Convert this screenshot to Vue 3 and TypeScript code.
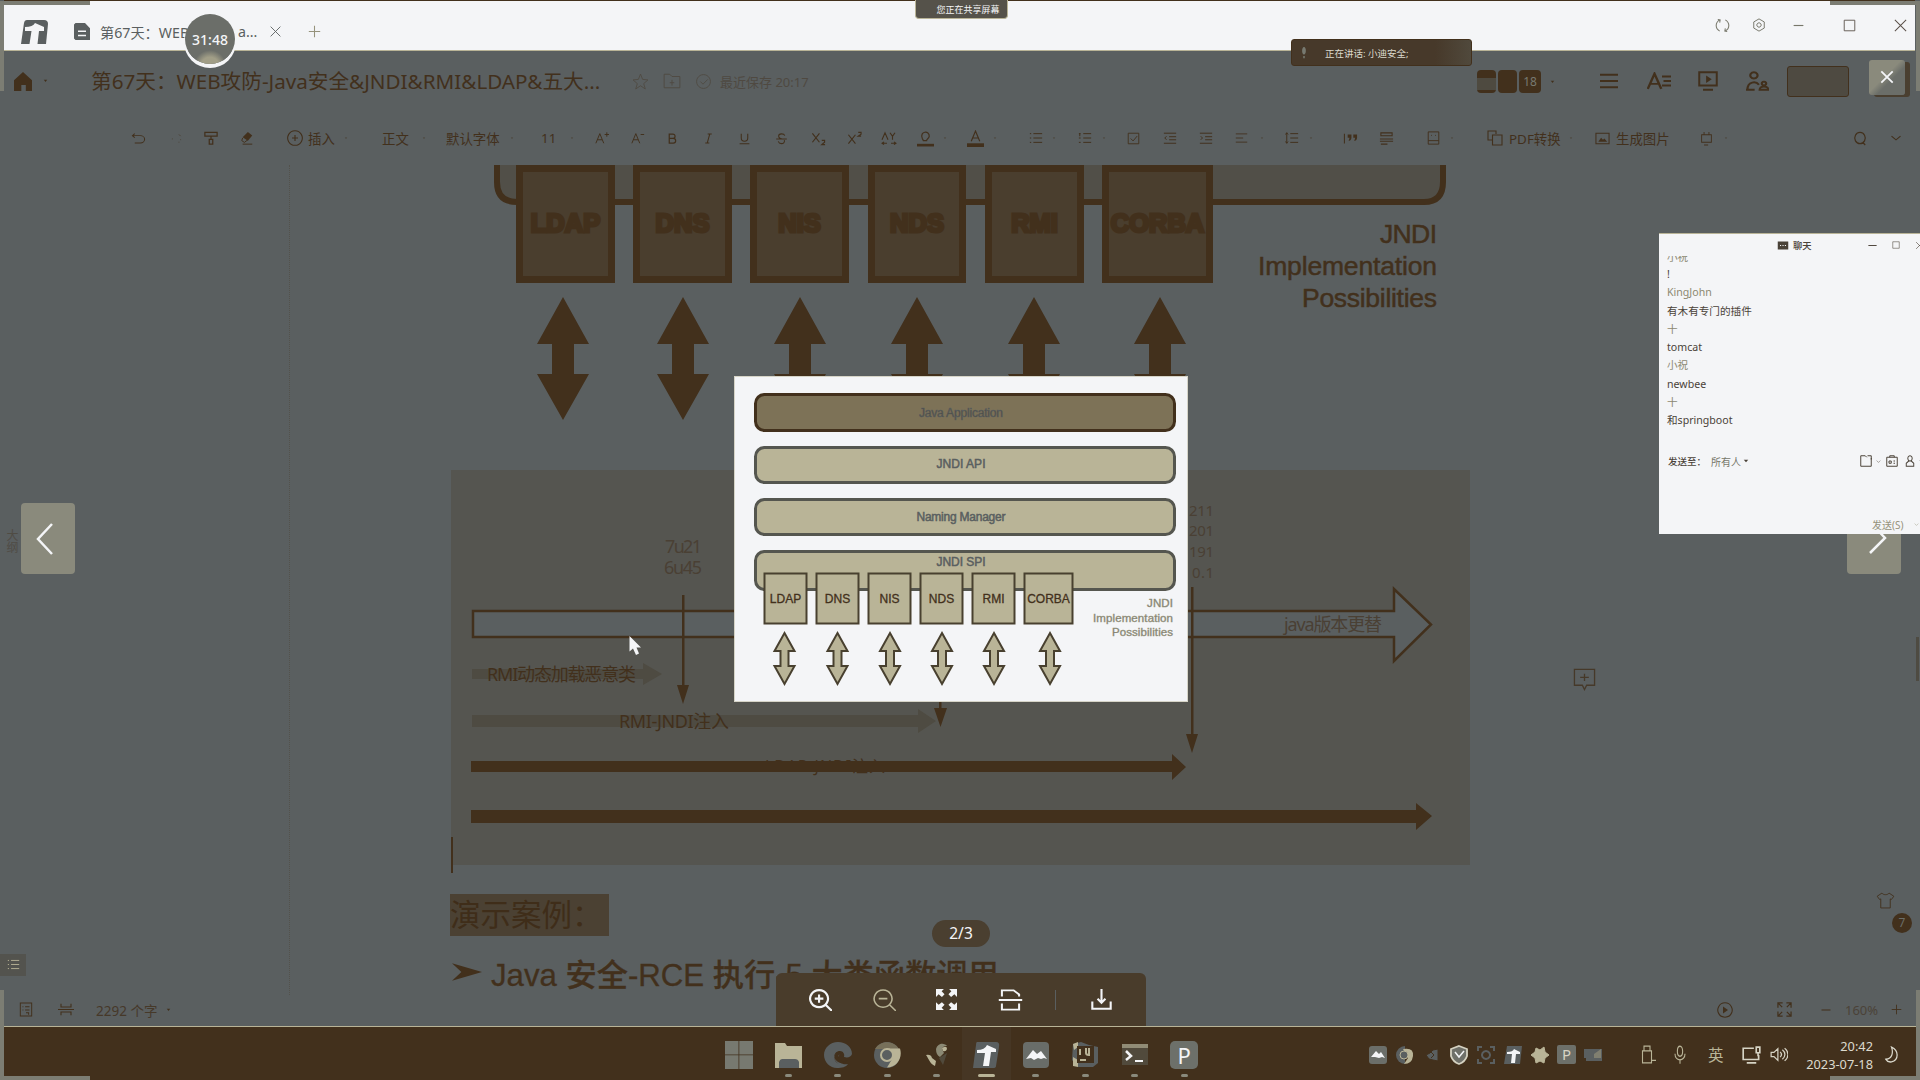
<script setup lang="ts">
import { h } from 'vue'

interface Glyph { s?: string; f?: string; w?: number }

const glyphs: Record<string, Glyph> = {
  undo: { s: 'M4 2 1.5 4.5 4 7M1.5 4.5H10a4.5 4.5 0 0 1 0 9H4' },
  redo: { s: 'M11 3l2 2M13 9v1M11 12v1M3 8v1' },
  painter: { s: 'M1 1.5h14v4H1zM8 5.5v3.500M6 9h4v5H6z', w: 1.4 },
  eraser: { f: 'M9 1l5 4-5 6-6-4z', s: 'M3 8l-1 3 3 2 4-3M3 15h11' },
  plusCircle: { s: 'M8 .7a7.300 7.300 0 1 0 .01 0zM8 5v6M5 8h6', w: 1.1 },
  aPlus: { s: 'M1 14 5.500 3 10 14M3 10h5M11 4h5M13.500 1.500v5' },
  aMinus: { s: 'M1 14 5.500 3 10 14M3 10h5M11 4h4' },
  bold: { s: 'M4 2.500h4.500a2.600 2.600 0 0 1 0 5.300H4zM4 7.800h5a2.900 2.900 0 0 1 0 5.800H4z', w: 1.5 },
  italic: { s: 'M7 2.500h5M4 13.500h5M9.500 2.500l-3 11', w: 1.3 },
  underline: { s: 'M4 2v5.500a4 4 0 0 0 8 0V2M2 14.500h12', w: 1.3 },
  strike: { s: 'M12 4.500C11 1.500 4.500 1.500 4.500 5c0 2 2 3 3.500 3M1.500 8.500h13M11.500 10c.8 3-1.500 4.300-3.500 4.300S4.500 13 4 11.500', w: 1.3 },
  sub: { s: 'M1.500 2.500 9 12M9 2.500 1.500 12M11.500 10h3v2l-3 2.500h3.500', w: 1.2 },
  sup: { s: 'M1.500 4 9 13.500M9 4l-7.500 9.500M12 1.500h3v2l-3 2h3', w: 1.2 },
  spacing: { s: 'M1 10 4 2l3 8M9 2l2.500 4L14 2M11.500 6v4M1 14h5M10 14h5M3 12.500 1 14l2 1.500M13 12.500l2 1.500-2 1.500' },
  marker: { s: 'M5 8c-3-7 7-8 6.500-2-.2 2-2.500 2.500-2.500 4H6z', f: 'M0 13h16v2.500H0z' },
  fontColor: { s: 'M4 10.500 8 1l4 9.500M5.500 7.500h5', f: 'M0 12.500h16V16H0z' },
  bullets: { s: 'M5 3h10M5 8h10M5 13h10M1 3h1.500M1 8h1.500M1 13h1.500' },
  numbers: { s: 'M6 3h9M6 8h9M6 13h9M1 3h2M2 3v3M1 8h2M1 13h2' },
  check: { s: 'M1.500 1.500h13v13h-13zM4.500 8l3 3 5-6' },
  outdent: { s: 'M1 2.500h14M7 6.500h8M7 10h8M1 14h14M4 6 2 8l2 2' },
  indent: { s: 'M1 2.500h14M7 6.500h8M7 10h8M1 14h14M2 6l2 2-2 2' },
  align: { s: 'M1 2.500h14M1 8h9M1 13.500h14' },
  lineHeight: { s: 'M6 3h9M6 8h9M6 13h9M2 2v12M.5 4 2 2l1.500 2M.5 12 2 14l1.500-2' },
  quote: { s: 'M1.500 2v12', f: 'M5 3h4v4c0 3-2 4-3 4l1-4H5zM11 3h4v4c0 3-2 4-3 4l1-4h-2z' },
  divider: { s: 'M2 5V2h12v3zM1 8.500h14M1 11h14M2 14h7' },
  card: { s: 'M1.500 1h13v14h-13zM1.500 11h13M5 5h1M10 5h1' },
  copy: { s: 'M5 10H1V1h8v3M5.500 5h9.500v10H5.500z' },
  image: { s: 'M1 1.500h14v13H1z', f: 'M3.500 12l3-5 2 2.500L10 8l3 4z' },
  plug: { s: 'M2 4h12v8H2zM5 1v3M11 1v3M5 15h5' },
  search: { s: 'M8 1.500a6 6 0 1 0 .01 0zM11 12l3 3', w: 1.4 },
  down: { s: 'M2 5l6 6 6-6', w: 1.4 },
  dot: { f: 'M5 6.500h6l-3 4z' },
  caretDown: { f: 'M2 4.500h12l-6 7z' },
  home: { f: 'M0 7 8 0l8 7v9h-5.500v-5h-4v5H0z' },
  star: { s: 'M8 1l2 5 5 .500-4 3.500 1.500 5L8 12l-4.500 3L5 10 1 6.500 6 6z', w: .8 },
  folder: { s: 'M1 2h5l2 2h7v10H1zM8 7v5M6 9.500h4', w: .8 },
  cloud: { s: 'M8 1.500a6.500 6.500 0 1 0 .01 0zM5 8l2.500 2.500L12 6', w: .8 },
  menu: { s: 'M0 2.500h16M0 8h16M0 13.500h16', w: 1.8 },
  textStyle: { s: 'M.5 15 5 1.500 9.500 15M2 10.500h6M10 4h6M11 8h5M10 12h6', w: 1.6 },
  present: { s: 'M1 1h14v10.500H1zM4 15h8', f: 'M6.500 3.500l4.500 3-4.500 3z', w: 1.6 },
  people: { s: 'M5.500 1a2.500 2.500 0 1 0 .01 0zM1 15c0-7 6-7 8-4M0 15h6M12.500 8.500a1.500 1.500 0 1 0 .01 0M9.500 15c0-3.500 6-3.500 6 0z', w: 1.5 },
  close: { s: 'M2 2l12 12M14 2 2 14' },
  closeBold: { s: 'M1.500 1.500l13 13M14.500 1.500l-13 13', w: 2.1 },
  plus: { s: 'M8 1v14M1 8h14', w: 1.3 },
  minus: { s: 'M2 8h12', w: 1.4 },
  square: { s: 'M1.500 1.500h13v13h-13z' },
  refresh: { s: 'M5 14C0 11 0 5 5 2M3 1.500l2.500.500L5 5M11 2c5 3 5 9 0 12M13 14.500l-2.500-.500L11 11' },
  gear: { s: 'M8 1l6 3.500v7L8 15l-6-3.500v-7zM8 5.500a2.500 2.500 0 1 0 .01 0z' },
  doc: { f: 'M0 1.500 1.500 0H11l5 5v11H1.500L0 14.500zM4 7v1.500h8V7zM4 11v1.500h8V11z' },
  outline: { s: 'M1.500 1h13v14h-13zM4 5h1M7 5h5M4 8.500h1M7 8.500h5M8 11.500h3v2' },
  pageBreak: { s: 'M3 1v4h10V1M0 8h16M3 15v-4h10v4' },
  playCircle: { s: 'M8 .8a7.200 7.200 0 1 0 .01 0z', f: 'M6 4.500l5 3.500-5 3.500z', w: 1.1 },
  expand: { s: 'M1 6V1h5M1 1l4.500 4.500M10 1h5v5M15 1l-4.500 4.500M1 10v5h5M1 15l4.500-4.500M15 10v5h-5M15 15l-4.500-4.500', w: 1.3 },
  zoomIn: { s: 'M7 .8a6.200 6.200 0 1 0 .01 0zM11.500 11.500 16 16M7 4v6M4 7h6', w: 1.5 },
  zoomOut: { s: 'M7 .8a6.200 6.200 0 1 0 .01 0zM11.500 11.500 16 16M4 7h6' },
  actual: { f: 'M0 0h6L4.300 1.800 6.500 4 4.500 6 2 4 0 6zM16 0v6l-2-2-2.500 2-2-2 2.200-2.200L10 0zM0 16v-6l2 2 2.500-2 2 2-2.200 2.200L6 16zM16 16h-6l1.700-1.800L9.500 12l2-2 2.500 2 2-2z' },
  rotate: { s: 'M2.500 5.500V1H10l3.500 3v1.500M2.500 10.500V15h11v-4.500M.5 8h15', w: 1.3 },
  download: { s: 'M1 9.500V15h14V9.500M8 0v10M5 7.500l3 3 3-3', w: 1.6 },
  mic: { s: 'M8 1c-3.500 0-3.500 8 0 8s3.500-8 0-8zM3 7c0 6.500 10 6.500 10 0M8 12v3' },
  micFull: { f: 'M8 0c-5 0-5 10 0 10s5-10 0-10zM6.500 12h3v3h-3z' },
  usb: { s: 'M4 1h6v4H4zM2.500 5h9v10h-9zM11 13h5' },
  monitor: { s: 'M10 2H1v10h13V8M4 15h8M12 1h3v5h-3zM13.500 6v3', w: 1.4 },
  speaker: { s: 'M1 6v4h2.500L7 13.500v-11L3.500 6zM9 5.500c1.500 1.500 1.500 3.500 0 5M11 3.500c3 2.500 3 6.500 0 9M13 2c4 3.500 4 8.500 0 12' },
  moon: { s: 'M8 1c8 3 8 12 0 14-3 .5-5-1-6-2.500C9 12 10 6 8 1z', w: 1.3 },
  shirt: { s: 'M5 1 1 4l2 3 1-.500V15h8V6.500l1 .500 2-3-4-3c-1 2-5 2-6 0z', w: .8 },
  chat: { f: 'M1 1h14v14H1zM4 7v1.800h1.500V7zM7.300 7v1.800h1.500V7zM10.500 7v1.800H12V7z' },
  fileUp: { s: 'M9 3 7 1H1v14h14V4M10 1h5v5', w: 1.3 },
  badge: { s: 'M1 3h14v12H1zM5 3V1h6v2M4 8h3v3H4zM10 8h2M10 11h2', w: 1.3 },
  person: { s: 'M8 1a3.500 3.500 0 1 0 .01 0zM6 8l-4 3v4h12v-4l-4-3', w: 1.5 },
  comment: { s: 'M1 1h14v11H9.500L8 15l-1.500-3H1zM8 4v5M5 6.500h6', w: .9 },
  arrowhead: { f: 'M0 1l16 7L0 15l5-7z' },
}

const Icon = (p: { n: string; w: number; t?: number }) => {
  const g = glyphs[p.n]
  const kids = []
  if (g.s) kids.push(h('path', { d: g.s, fill: 'none', stroke: 'currentColor', 'stroke-width': g.w ?? 1.1 }))
  if (g.f) kids.push(h('path', { d: g.f, fill: 'currentColor', 'fill-rule': 'evenodd' }))
  return h('svg', { width: p.w, height: p.t ?? p.w, viewBox: '0 0 16 16', preserveAspectRatio: 'none', style: 'display:block;flex:none' }, kids)
}
Icon.props = ['n', 'w', 't']

interface Item { x: number; w: number; icon?: string; t?: number; label?: string; cls?: string }

/* Turns left edges into the gap that precedes every item of a flex row. */
const spaced = (items: Item[]) => items.map((it, i) => ({ ...it, gap: it.x - (i ? items[i - 1].x + items[i - 1].w : 0) }))
const d = (x: number): Item => ({ x: x - 3, w: 6, icon: 'dot', cls: 'dim' })

const tools = spaced([
  { x: 131, w: 15, icon: 'undo', t: 13 }, { x: 170, w: 13, icon: 'redo', cls: 'dim' },
  { x: 204, w: 14, icon: 'painter', t: 15 }, { x: 240, w: 14, icon: 'eraser' },
  { x: 287, w: 16, icon: 'plusCircle' }, { x: 308, w: 28, label: '插入' }, d(346),
  { x: 382, w: 26, label: '正文' }, d(424), { x: 446, w: 55, label: '默认字体' }, d(512),
  { x: 541, w: 14, label: '11' }, d(572),
  { x: 595, w: 14, icon: 'aPlus' }, { x: 631, w: 14, icon: 'aMinus' }, { x: 666, w: 13, icon: 'bold' },
  { x: 702, w: 13, icon: 'italic' }, { x: 738, w: 13, icon: 'underline' }, { x: 775, w: 13, icon: 'strike' },
  { x: 811, w: 15, icon: 'sub' }, { x: 847, w: 15, icon: 'sup' }, { x: 881, w: 16, icon: 'spacing', t: 14 },
  { x: 917, w: 17, icon: 'marker', t: 17 }, d(945), { x: 967, w: 17, icon: 'fontColor', t: 17 }, d(995),
  { x: 1029, w: 14, icon: 'bullets' }, d(1054), { x: 1078, w: 14, icon: 'numbers' }, d(1104),
  { x: 1127, w: 13, icon: 'check' }, { x: 1163, w: 14, icon: 'outdent' }, { x: 1199, w: 14, icon: 'indent' },
  { x: 1235, w: 13, icon: 'align', t: 12 }, d(1262), { x: 1285, w: 14, icon: 'lineHeight' }, d(1311),
  { x: 1343, w: 15, icon: 'quote', t: 13 }, { x: 1379, w: 15, icon: 'divider' }, { x: 1427, w: 13, icon: 'card', t: 14 }, d(1452),
  { x: 1487, w: 16, icon: 'copy' }, { x: 1509, w: 53, label: 'PDF转换' }, d(1571),
  { x: 1595, w: 15, icon: 'image', t: 13 }, { x: 1616, w: 54, label: '生成图片' },
  { x: 1700, w: 13, icon: 'plug', t: 15 }, d(1726), { x: 1853, w: 14, icon: 'search', t: 15 }, { x: 1890, w: 12, icon: 'down', t: 10 },
])

const headIcons = spaced([
  { x: 0, w: 18, icon: 'menu' }, { x: 47, w: 24, icon: 'textStyle', t: 18 },
  { x: 98, w: 20, icon: 'present' }, { x: 146, w: 23, icon: 'people', t: 20 },
])

const bigBoxes = [['LDAP', 516, 99], ['DNS', 633, 99], ['NIS', 750, 99], ['NDS', 868, 98], ['RMI', 985, 99], ['CORBA', 1102, 111]] as [string, number, number][]
const bigArrows = [563, 683, 800, 917, 1034, 1160]
const smallBoxes = [['LDAP', 764.5, 42], ['DNS', 816.5, 42], ['NIS', 868.5, 42], ['NDS', 920.5, 42], ['RMI', 972.5, 42], ['CORBA', 1024.5, 48]] as [string, number, number][]
const smallArrows = [784.5, 837.5, 890, 942, 994, 1050]
const bars = [
  { y: 394.5, h: 36, t: 'Java Application', w: 84, ty: 413, c: 'dark' },
  { y: 447.500, h: 35, t: 'JNDI API', w: 49, ty: 464 },
  { y: 499.5, h: 35, t: 'Naming Manager', w: 89, ty: 517 },
  { y: 551.5, h: 38, t: 'JNDI SPI', w: 49, ty: 562 },
]

const messages = [
  { t: '小祝', c: 'soft cut' }, { t: '!', c: '' }, { t: 'KingJohn', c: 'soft' }, { t: '有木有专门的插件', c: '' },
  { t: '十', c: 'soft' }, { t: 'tomcat', c: '' }, { t: '小祝', c: 'soft' }, { t: 'newbee', c: '' },
  { t: '十', c: 'soft' }, { t: '和springboot', c: '' },
]
</script>

<template>
  <div class="desktop">
    <header class="tabs">
      <svg class="logo" width="27" height="24" viewBox="0 0 27 24">
        <path d="M6 0H23q4 0 4 4L25 24H0L3 3Q3.500 0 6 0z" fill="#5a5f60" />
        <path d="M4 7q8 0 10-4l9 4v4H18L16.500 24H8.500L10.500 11H4z" fill="#f4f5f7" />
      </svg>
      <Icon class="tabdoc" n="doc" :w="16" :t="17" />
      <span class="tabname">第67天：WEB</span><span class="tabrest">a...</span>
      <Icon class="tabx" n="close" :w="13" />
      <Icon class="tabplus" n="plus" :w="13" />
      <div class="winbtns">
        <Icon n="refresh" :w="15" /><Icon n="gear" :w="14" /><Icon n="minus" :w="13" />
        <Icon class="dk" n="square" :w="13" /><Icon class="dk" n="close" :w="15" />
      </div>
    </header>

    <div class="head">
      <Icon n="home" :w="18" :t="19" /><Icon class="hd" n="dot" :w="9" />
      <span class="title">第67天：WEB攻防-Java安全&amp;JNDI&amp;RMI&amp;LDAP&amp;五大...</span>
      <div class="meta"><Icon n="star" :w="17" /><Icon n="folder" :w="18" /><Icon n="cloud" :w="17" /><span>最近保存 20:17</span></div>
      <div class="avatars"><i class="a1"></i><i class="a2"></i><b>18</b></div>
      <Icon class="hd2" n="dot" :w="9" />
      <div class="hicons">
        <Icon v-for="i in headIcons" :key="i.x" :n="i.icon!" :w="i.w" :t="i.t" :style="{ marginLeft: i.gap + 'px' }" />
      </div>
      <div class="share"></div>
    </div>

    <div class="tools">
      <div v-for="i in tools" :key="i.x" class="tool" :class="i.cls" :style="{ marginLeft: i.gap + 'px', width: i.w + 'px' }">
        <Icon v-if="i.icon" :n="i.icon" :w="i.w" :t="i.t" /><span v-else>{{ i.label }}</span>
      </div>
    </div>

    <main class="doc">
      <div class="gutter"></div>
      <article>
        <svg class="jndi" width="1019" height="305" viewBox="450 165 1019 305">
          <path d="M497 150V182q0 20 20 20H1424q19 0 19-20V150z" fill="#514f48" stroke="#42301c" stroke-width="6" />
          <g v-for="b in bigBoxes" :key="b[0]">
            <rect :x="b[1] + 3.5" y="168.500" :width="b[2] - 7" height="111" fill="#4a3e2e" stroke="#42301c" stroke-width="7" />
            <text :x="b[1] + b[2] / 2" y="232" text-anchor="middle" class="boxt">{{ b[0] }}</text>
          </g>
          <path v-for="x in bigArrows" :key="x" :transform="`translate(${x} 0)`" fill="#42301c" d="M0 297 26 344H11V374H26L0 420-26 374H-11V344H-26z" />
          <g class="jtext" text-anchor="end">
            <text x="1437" y="243" textLength="57">JNDI</text>
            <text x="1437" y="275" textLength="179">Implementation</text>
            <text x="1437" y="307" textLength="135">Possibilities</text>
          </g>
        </svg>
        <svg class="timeline" width="1019" height="395" viewBox="451 470 1019 395">
          <path d="M473 611H1394V589L1431 624.500 1394 661V637H473z" fill="#5a5f60" stroke="#42301c" stroke-width="2.500" />
          <g fill="#4e4b42"><path d="M472 669H643V663L662 674 643 685V679H472z" /><path d="M472 715H918V709L936 721 918 733V727H472z" /></g>
          <g fill="#42301c">
            <path d="M471 761H1172V754L1186 767 1172 780V772H471z" /><path d="M471 810H1416V803L1432 816 1416 830V823H471z" />
            <path d="M682 595h2.500V685H689L683 704 677 685h5z" /><path d="M1191 587h2.500V734H1198L1192 753 1186 734h5z" />
            <path d="M939 595h2.500V708H947L940.500 727 934 708h5z" />
          </g>
          <g class="tl">
            <text x="665" y="553" textLength="37" class="thin">7u21</text><text x="664" y="574" textLength="38" class="thin">6u45</text>
            <text x="1189" y="516" textLength="25" class="thin sm">211</text><text x="1189" y="536" textLength="25" class="thin sm">201</text>
            <text x="1189" y="557" textLength="25" class="thin sm">191</text><text x="1192" y="578" textLength="22" class="thin sm">0.1</text>
            <text x="487" y="681" textLength="149">RMI动态加载恶意类</text>
            <text x="619" y="728" textLength="110">RMI-JNDI注入</text>
            <text x="765" y="772" textLength="120" class="ldap">LDAP-JNDI注入</text>
            <text x="1284" y="631" textLength="98" class="thin">java版本更替</text>
          </g>
        </svg>
        <div class="caret"></div>
        <h2><span>演示案例：</span></h2>
        <h3><Icon n="arrowhead" :w="30" :t="20" /><span>Java 安全-RCE 执行-5 大类函数调用</span></h3>
      </article>
      <Icon class="addcomment" n="comment" :w="23" />
      <div class="scroll"></div>
      <div class="toc"><Icon n="bullets" :w="13" /></div>
      <Icon class="shirt" n="shirt" :w="19" :t="17" />
      <div class="seven">7</div>
      <div class="sidetext">大纲</div>
    </main>

    <footer class="status">
      <Icon n="outline" :w="14" :t="15" /><Icon class="pb" n="pageBreak" :w="16" :t="13" />
      <span class="words">2292 个字</span><Icon n="dot" :w="9" />
      <div class="sright">
        <Icon n="playCircle" :w="16" /><Icon n="expand" :w="15" /><Icon n="minus" :w="12" /><span>160%</span><Icon n="plus" :w="11" />
      </div>
    </footer>

    <div class="taskbar">
      <div class="apps">
        <div class="app"><svg width="28" height="28" viewBox="0 0 28 28"><path d="M0 0h13.500v13.500H0zM14.300 0H28v13.500H14.300zM0 14.300h13.500V28H0zM14.300 14.300H28V28H14.300z" fill="#777970" /></svg></div>
        <div class="app run"><svg width="28" height="28" viewBox="0 0 28 28"><path d="M1 2h10l2 3h15v22H1z" fill="#b9b497" /><path d="M5 27v-6q1-3 3-3h13q3 0 4 3v6z" fill="#5a5f60" /></svg></div>
        <div class="app run"><svg width="28" height="28" viewBox="0 0 28 28"><path d="M14 1C6 1 0 7 0 14s6 13 13 13c5 0 9-1 11-4-5 1-10-1-10-6 0-3 2-2 1-4-1-1-3-1-4 1-2 4 1 7 4 9-7-3-6-13 1-13 3 0 5 3 4 6 4 1 7 0 8-3C28 6 22 1 14 1z" fill="#5a5f60" /><path d="M12 12q4-3 4 1-3 2-1 5 3 4 9 1-5 5-10 2-6-4-2-9z" fill="#42301c" /></svg></div>
        <div class="app run"><svg width="28" height="28" viewBox="0 0 28 28"><circle cx="14" cy="14" r="13" fill="#5a5f60" /><path d="M2 8C7-1 21-1 26 8L14 8z" fill="#77705a" /><path d="M14 7.500H27c3 9-3 19-13 19l6-10z" fill="#b9b497" /><circle cx="14" cy="14" r="6" fill="#5a5f60" stroke="#b9b497" stroke-width="2" /></svg></div>
        <div class="app run"><svg width="28" height="28" viewBox="0 0 28 28"><path d="M3 14q5-1 6 3l4 3-1 5c-5-2-6-7-9-11z" fill="#b9b497" /><path d="M13 8c2-7 9-6 11-3-5 0-6 2-3 7l-4 4q-4-2-4-8z" fill="#8b8974" /><path d="M19 7q5-3 5 1-1 3-4 2z" fill="#b9b497" /><path d="M16 17l8-5-4 12z" fill="#514a3c" /></svg></div>
        <div class="app run on"><svg width="28" height="28" viewBox="0 0 28 28"><path d="M5 1h19q4 0 3 5l-3 19q0 2-3 2H1L4 4q0-3 1-3z" fill="#5a5f60" /><path d="M5 9q8 0 10-5l9 4v3H19L17 25H11L13 12H5z" fill="#f4f5f7" /></svg></div>
        <div class="app run"><svg width="28" height="28" viewBox="0 0 28 28"><rect x="1" y="1" width="26" height="26" rx="4" fill="#696d69" /><path d="M4 18 11 9l4 4 4-3 6 8-3-1-3 1-3-1-4 2-3-2z" fill="#f4f5f7" /></svg></div>
        <div class="app run"><svg width="28" height="28" viewBox="0 0 28 28"><path d="M2 3l8-2 8 3 9 2v16l-5 4H7l-6-7z" fill="#5a5f60" /><path d="M2 3l5-2v5L3 9zM2 16l5 3v7l-5-1z" fill="#b9b497" /><rect x="6" y="5" width="17" height="17" fill="#42301c" /><path d="M9 8v6M15 7v5q0 2 3 2V7M9 19h6" fill="none" stroke="#b9b497" stroke-width="2" /></svg></div>
        <div class="app run"><svg width="28" height="28" viewBox="0 0 28 28"><path d="M1 3h26v21H1z" fill="#514a3c" /><path d="M1 3h26v4H1z" fill="#918c76" /><path d="M5 10l5 5-5 4" fill="none" stroke="#f4f5f7" stroke-width="2.500" /><path d="M14 20h8" stroke="#f4f5f7" stroke-width="2" /></svg></div>
        <div class="app run"><div class="p">P</div></div>
      </div>
      <div class="tray">
        <svg width="20" height="20" viewBox="0 0 20 20"><rect x="1" y="1" width="18" height="18" rx="3" fill="#6b6e69" /><path d="M3 12l5-6 3 3 2-2 4 6-3-1-3 1-4-1z" fill="#f4f5f7" /></svg>
        <svg width="20" height="20" viewBox="0 0 20 20"><path d="M10 1a9 9 0 0 0 0 18z" fill="#5a5f60" /><path d="M8 4q11-2 10 7-1 8-9 8l4-6z" fill="#b9b497" /><circle cx="9" cy="10" r="4" fill="#5a5f60" stroke="#b9b497" /></svg>
        <svg width="20" height="20" viewBox="0 0 20 20"><path d="M16 4v12l-5-1-4-1-3-4 4-2 3-3zM9 7l3 3-3 3" fill="#5a5f60" stroke="#42301c" /></svg>
        <svg width="20" height="20" viewBox="0 0 20 20"><path d="M10 1l8 3v7q-2 6-8 8-6-2-8-8V4z" fill="#6f7069" stroke="#d5d2c2" stroke-width="1.800" /><path d="M6 7l4 5 5-6" fill="none" stroke="#f4f5f7" stroke-width="1.500" /></svg>
        <svg width="20" height="20" viewBox="0 0 20 20"><path d="M2 6V2h4M14 2h4v4M18 14v4h-4M6 18H2v-4M10 6a4 4 0 1 0 .01 0z" fill="none" stroke="#5a5f60" stroke-width="2" /></svg>
        <svg width="20" height="20" viewBox="0 0 20 20"><path d="M4 1h15l-2 18H1z" fill="#5a5f60" /><path d="M4 7q6 0 7-3l6 3v2H13l-1 9H8l1-9H4z" fill="#f4f5f7" /></svg>
        <svg width="20" height="20" viewBox="0 0 20 20"><path d="M6 3l4 2 4-3 1 5 4 3-4 3-1 5-4-2-4 2-1-5-4-3 4-3z" fill="#b9b497" stroke="#b9b497" stroke-linejoin="round" /></svg>
        <div class="p sm">P</div>
        <svg width="20" height="20" viewBox="0 0 20 20"><path d="M1 4h18v12H3v-3H1z" fill="#5a5f60" /><path d="M11 9l7-5v9h-7z" fill="#807f70" /></svg>
      </div>
      <div class="sys">
        <Icon class="s1" n="usb" :w="16" :t="19" /><Icon class="s2" n="mic" :w="16" :t="20" />
        <span class="ime">英</span><Icon class="s3" n="monitor" :w="19" :t="18" /><Icon class="s4" n="speaker" :w="18" :t="17" />
        <div class="clock"><span>20:42</span><span>2023-07-18</span></div>
        <Icon class="s5" n="moon" :w="15" :t="17" />
      </div>
    </div>

    <div class="viewer">
      <svg width="454" height="326" viewBox="734 376 454 326">
        <g v-for="b in bars" :key="b.t">
          <rect x="755.500" :y="b.y" width="419" :height="b.h" rx="9" :fill="b.c ? '#7d7257' : '#b9b497'" :stroke="b.c ? '#42301c' : '#55564f'" stroke-width="3" />
          <text class="vt" x="961" :y="b.ty + 4" text-anchor="middle" :textLength="b.w" :fill="b.c ? '#4b463c' : '#5a5f60'">{{ b.t }}</text>
        </g>
        <g v-for="b in smallBoxes" :key="b[0]">
          <rect :x="b[1]" y="573.500" :width="b[2]" height="50" fill="#b9b497" stroke="#48402f" stroke-width="2" />
          <text class="vb" :x="b[1] + b[2] / 2" y="603" text-anchor="middle">{{ b[0] }}</text>
        </g>
        <path v-for="x in smallArrows" :key="x" :transform="`translate(${x} 0)`" fill="#b9b497" stroke="#48402f" stroke-width="2" d="M0 633 10 651H4V666H10L0 684-10 666H-4V651H-10z" />
        <g class="vr" text-anchor="end">
          <text x="1173" y="607" textLength="26">JNDI</text><text x="1173" y="622" textLength="80">Implementation</text><text x="1173" y="636" textLength="61">Possibilities</text>
        </g>
      </svg>
    </div>
    <svg class="pointer" width="13" height="20" viewBox="0 0 13 20"><path d="M.5 0V15.500L4 12.500 7 19 10 17.500 7.500 11.500H12z" fill="#f4f5f7" /></svg>

    <div class="nav prev"><svg width="54" height="71"><path d="M31 21 17 36 31 51" fill="none" stroke="#f4f5f7" stroke-width="2.500" /></svg></div>
    <div class="nav next"><svg width="54" height="71"><path d="M24 20 38 35 23 50" fill="none" stroke="#f4f5f7" stroke-width="2.500" /></svg></div>
    <div class="shut"><Icon n="closeBold" :w="14" /></div>
    <div class="page">2/3</div>
    <div class="vtools">
      <Icon n="zoomIn" :w="23" :t="22" /><Icon class="off" n="zoomOut" :w="23" :t="22" /><Icon n="actual" :w="21" />
      <Icon n="rotate" :w="25" :t="22" /><i></i><Icon n="download" :w="21" />
    </div>

    <section class="chat">
      <div class="chead"><Icon n="chat" :w="12" :t="9" /><b>聊天</b><div><Icon n="minus" :w="11" /><Icon n="square" :w="8" /><Icon n="close" :w="9" /></div></div>
      <div class="msgs"><p v-for="(m, i) in messages" :key="i" :class="m.c">{{ m.t }}</p></div>
      <div class="to"><span>发送至：</span><em>所有人</em><Icon n="caretDown" :w="6" />
        <div><Icon n="fileUp" :w="12" /><Icon n="down" :w="5" /><Icon n="badge" :w="12" /><Icon n="person" :w="10" :t="12" /><Icon n="down" :w="5" /></div>
      </div>
      <div class="send"><span>发送(S)</span><Icon n="down" :w="5" /></div>
    </section>

    <div class="talk"><Icon n="micFull" :w="8" :t="12" /><span>正在讲话: 小迪安全;</span></div>
    <div class="sharing">您正在共享屏幕</div>
    <div class="timer">31:48</div>
    <i class="grip g1"></i><i class="grip g2"></i><i class="grip g3"></i><i class="grip g4"></i>
  </div>
</template>

<style>
body { margin: 0; background: #5a5f60; overflow: hidden; }
</style>

<style scoped>
* { box-sizing: border-box; }
.desktop { position: relative; width: 1920px; height: 1080px; overflow: hidden; display: flex; flex-direction: column; background: #5a5f60; color: #42301c; font-family: "Noto Sans", "Noto Sans CJK SC", sans-serif; white-space: nowrap; }
.tabs { flex: none; height: 51px; border-top: 1px solid #42301c; border-bottom: 1px solid #b9b497; background: #f4f5f7; display: flex; align-items: center; margin: 0 5px 0 4px; padding: 12px 0 0 17px; color: #5a5f60; }
.logo { flex: none; margin-right: 26px; }
.tabname { width: 88px; margin-left: 10px; font-size: 14.200px; }
.tabrest { margin-left: 50px; width: 19px; font-size: 14.200px; }
.tabx { margin-left: 12px; }
.tabplus { margin-left: 26px; color: #96937c; }
.winbtns { margin-left: auto; display: flex; align-items: center; margin-right: 7px; margin-top: -13px; color: #77776a; }
.winbtns > * + * { margin-left: 22px; }
.winbtns > :nth-child(3) { margin-left: 26px; }
.winbtns > :nth-child(4) { margin-left: 38px; }
.winbtns > :nth-child(5) { margin-left: 37px; }
.dk { color: #5a5048; }
.head { flex: none; height: 60px; display: flex; align-items: center; padding-left: 14px; }
.hd { margin: -2px 0 0 9px; }
.title { margin: -2px 0 0 41px; width: 508px; font-size: 20.650px; }
.meta { display: flex; align-items: center; margin-left: 33px; width: 170px; gap: 14px; opacity: .45; font-size: 13px; }
.meta span { margin-left: -6px; }
.avatars { margin-left: 675px; display: flex; gap: 2px; }
.avatars > * { height: 23px; width: 19px; border-radius: 4px; background: #42301c; }
.avatars .a1 { background: linear-gradient(#42301c 35%, #4e4a40 35% 88%, #42301c 88%); }
.avatars b { width: 22px; font-size: 12px; font-weight: 400; line-height: 23px; text-align: center; color: #777970; }
.hd2 { margin-left: 7px; }
.hicons { display: flex; align-items: center; margin-left: 43px; width: 187px; }
.share { width: 62px; height: 31px; border: 1px solid #42301c; border-radius: 3px; background: #4e4a41; }
.tools { flex: none; height: 54px; display: flex; align-items: center; font-size: 13.400px; }
.tool { flex: none; }
.dim { opacity: .6; }
.doc { position: relative; flex: 1; min-height: 0; display: flex; overflow: hidden; }
.gutter { width: 290px; border-right: 1px dotted #53524c; margin-right: 160px; }
article { width: 1020px; }
.jndi { display: block; }
.boxt { font: bold 25.500px "Liberation Sans", sans-serif; fill: #42301c; stroke: #42301c; stroke-width: 3; }
.jtext { font: 26.500px "Liberation Sans", sans-serif; fill: #42301c; stroke: #42301c; stroke-width: .5; }
.timeline { display: block; margin-left: 1px; background: #555550; }
.tl { font: 18px "Noto Sans", "Noto Sans CJK SC", sans-serif; fill: #42301c; }
.thin { fill: #4a4034; }
.sm { font-size: 15px; }
.ldap { font-size: 16px; }
.caret { width: 2px; height: 36px; margin: -28px 0 0 1px; background: #42301c; }
h2 { margin: 21px 0 0; height: 42px; line-height: 41px; font-weight: 400; font-size: 30.500px; display: flex; }
h2 span { width: 159px; background: #4b4133; color: #3f2d19; }
h3 { margin: 13px 0 0 2px; height: 46px; display: flex; align-items: center; font: 500 31.200px "Liberation Sans", "Noto Sans CJK SC", sans-serif; -webkit-text-stroke: .3px #42301c; }
h3 span { margin-left: 9px; }
.addcomment { position: absolute; left: 1573px; top: 503px; opacity: .8; }
.scroll { position: absolute; left: 1916px; top: 472px; width: 3px; height: 44px; background: #4e4b42; }
.toc { position: absolute; left: 0; top: 789px; width: 26px; height: 22px; padding: 4px 7px; background: #53534e; color: #b9b497; }
.shirt { position: absolute; left: 1876px; top: 727px; }
.seven { position: absolute; left: 1892px; top: 748px; width: 20px; height: 20px; border-radius: 50%; background: #42301c; color: #6b6e69; font-size: 12px; line-height: 20px; text-align: center; }
.sidetext { position: absolute; left: 3px; top: 364px; writing-mode: vertical-rl; font-size: 12px; opacity: .4; }
.status { flex: none; height: 31px; display: flex; align-items: center; padding: 0 0 2px 19px; font-size: 13.500px; }
.pb { margin-left: 25px; }
.words { width: 64px; margin: 0 4px 0 22px; opacity: .8; }
.sright { margin-left: auto; display: flex; align-items: center; margin-right: 18px; }
.sright > :nth-child(2) { margin-left: 44px; }
.sright > :nth-child(3) { margin-left: 28px; }
.sright > span { width: 34px; margin: 0 12px 0 13px; opacity: .6; font-size: 13px; }
.taskbar { flex: none; height: 54px; border-top: 1px solid #b9b497; background: #42301c; position: relative; display: flex; color: #b9b497; }
.apps { display: flex; margin-left: 714px; width: 495px; }
.app { width: 49.500px; height: 53px; display: flex; flex-direction: column; align-items: center; padding-top: 14px; }
.run::after { content: ""; width: 7px; height: 3px; margin-top: 5px; border-radius: 2px; background: #8a8a7c; flex: none; }
.on { background: #463624; }
.on::after { width: 17px; background: #b9b497; }
.p { width: 28px; height: 28px; border-radius: 5px; background: #6d706a; color: #f4f5f7; font: 22px/28px "Noto Sans", sans-serif; text-align: center; }
.p.sm { width: 19px; height: 19px; border-radius: 2px; color: #d6d3c4; font-size: 15px; line-height: 19px; }
.tray { display: flex; align-items: center; gap: 7px; margin-left: 159px; height: 55px; }
.sys { display: flex; align-items: center; height: 55px; margin-left: 37px; }
.s2 { margin-left: 16px; }
.ime { margin-left: 20px; width: 16px; font-size: 15.500px; }
.s3 { margin-left: 18px; color: #d6d3c4; }
.s4 { margin-left: 9px; color: #d6d3c4; }
.clock { margin-left: 15px; width: 70px; text-align: right; display: flex; flex-direction: column; font-size: 12.800px; line-height: 18px; color: #dcdace; margin-top: 0; }
.s5 { margin-left: 11px; color: #dcdace; }
.viewer { position: absolute; left: 734px; top: 376px; width: 454px; height: 326px; background: #f4f5f7; box-shadow: inset 0 0 0 1px #d6d4c7; }
.viewer svg { display: block; }
.vt { font: 12px "Liberation Sans", sans-serif; stroke: #5a5f60; stroke-width: .5; }
.vb { font: 12px "Liberation Sans", sans-serif; fill: #42301c; stroke: #42301c; stroke-width: .3; }
.vr { font: 11.500px "Liberation Sans", sans-serif; fill: #77786e; stroke: #9c9982; stroke-width: .4; }
.pointer { position: absolute; left: 629px; top: 636px; }
.nav { position: absolute; top: 503px; width: 54px; height: 71px; border-radius: 4px; background: #8a8a7c; }
.prev { left: 21px; }
.next { left: 1847px; }
.shut { position: absolute; left: 1869px; top: 60px; width: 36px; height: 35px; padding: 10px 11px; background: linear-gradient(135deg, #8a8a7c 45%, #6b6e69 60%); color: #f4f5f7; border-radius: 3px; box-shadow: 5px 2px 0 #4a3f30; }
.page { position: absolute; left: 932px; top: 920px; width: 58px; height: 27px; border-radius: 14px; background: #4a3f30; color: #f4f5f7; font-size: 15.500px; line-height: 27px; text-align: center; }
.vtools { position: absolute; left: 776px; top: 973px; width: 370px; height: 53px; padding-left: 33px; border-radius: 6px 6px 0 0; background: #493c2b; display: flex; align-items: center; color: #f4f5f7; }
.vtools > :nth-child(n+2) { margin-left: 40.500px; }
.vtools .off { color: #b9b497; }
.vtools > i { width: 1px; height: 20px; margin-left: 32px !important; background: #5a5f60; }
.vtools > :nth-child(6) { margin-left: 35px; }
.chat { position: absolute; left: 1659px; top: 233px; width: 261px; height: 301px; background: #f4f5f7; border-top: 1px solid #b9b497; color: #4a4238; font-size: 10.500px; display: flex; flex-direction: column; overflow: hidden; }
.chead { height: 22px; display: flex; align-items: center; padding-left: 118px; font-size: 9px; flex: none; }
.chead b { font-weight: 500; margin-left: 4px; font-size: 9.300px; }
.chead div { display: flex; align-items: center; margin-left: 55px; }
.chead div > :nth-child(2) { margin-left: 14px; }
.chead div > :nth-child(3) { margin-left: 15px; }
.msgs { height: 178px; padding-left: 8px; font-size: 10.600px; }
.msgs p { margin: 0; height: 18.300px; line-height: 19px; }
.msgs .cut { height: 9px; line-height: 3px; overflow: hidden; }
.soft { color: #8c8971; }
.to { height: 54px; padding: 0 0 0 9px; display: flex; align-items: center; font-size: 10px; }
.to span { width: 40px; font-size: 9.500px; font-weight: 500; }
.to em { font-style: normal; margin-left: 5px; margin-right: 2px; color: #77776a; }
.to div { display: flex; align-items: center; margin-left: 111px; gap: 4px; }
.to div > :nth-child(3) { margin-left: 1px; }
.to div > :nth-child(4) { margin-left: 3px; }
.send { margin-top: auto; height: 17px; display: flex; align-items: center; padding: 0 0 2px 213px; color: #96937c; font-size: 10px; }
.send span { margin-right: 9px; width: 33px; }
.talk { position: absolute; left: 1291px; top: 39px; width: 181px; height: 27px; border-radius: 3px; background: linear-gradient(90deg, #47392a 80%, #50493c); border: 1px solid #42301c; display: flex; align-items: center; padding-left: 8px; color: #777970; font-size: 9.500px; }
.talk span { margin-left: 17px; color: #dcdace; }
.sharing { position: absolute; left: 915px; top: 0; width: 93px; height: 19px; border-radius: 0 0 4px 4px; background: #55524a; border: 1px solid #b9b497; border-top: 0; color: #f4f5f7; font-size: 9px; line-height: 19px; text-align: center; padding-left: 13px; }
.timer { position: absolute; left: 185px; top: 14px; width: 50px; height: 50px; border-radius: 50%; background: radial-gradient(circle at 50% 105%, #a19e87 0 16%, #6b6e69 28%); box-shadow: 0 3px 0 1px #f4f5f7; color: #f4f5f7; font-size: 14px; font-weight: 500; line-height: 51px; text-align: center; }
.grip { position: absolute; border: 0 solid #7c7d73; width: 90px; height: 90px; }
.g1 { left: 0; top: 1px; border-width: 4px 0 0 4px; }
.g2 { right: 0; top: 1px; border-width: 4px 4px 0 0; }
.g3 { left: 0; bottom: 0; border-width: 0 0 4px 4px; }
.g4 { right: 0; bottom: 0; border-width: 0 4px 4px 0; }
</style>
